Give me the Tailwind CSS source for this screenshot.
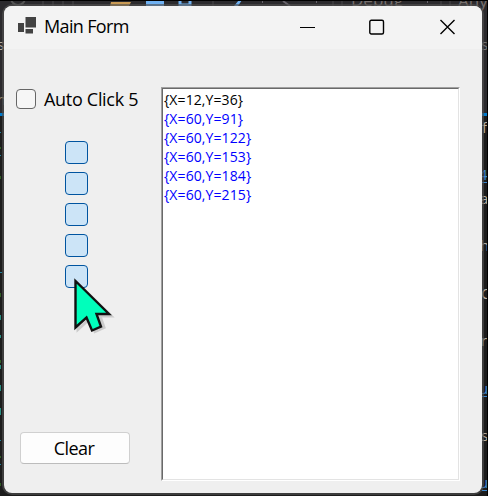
<!DOCTYPE html>
<html lang="en">
<head>
<meta charset="utf-8">
<title>Main Form</title>
<script src="https://cdn.jsdelivr.net/npm/@tailwindcss/browser@4"></script>
</head>
<body class="relative w-[488px] h-[496px] overflow-hidden bg-[#1c1c1c] pt-[6px] pl-[4px] font-['Open_Sans',sans-serif] text-black">
  <!-- Editor behind the window -->
  <svg class="absolute left-0 top-0" width="488" height="496" font-family="Open Sans, sans-serif" font-size="16">
    <rect width="488" height="115" fill="#2b2a2d"/>
    <rect y="113" width="4" height="3" fill="#007acc"/><rect x="482" y="113" width="6" height="3" fill="#007acc"/>
    <circle cx="18" cy="-2" r="7" fill="none" stroke="#555" stroke-width="2"/>
    <path d="M43 0v6M53 0v6M63 0v6M73 0v6M213 0v6M333 0v6M342 0v6M441 0v6M450 0v6" stroke="#48464b"/>
    <path d="M110 6l1-4h20l-2 4z" fill="#c99a54"/>
    <rect x="146" y="0" width="18" height="6" fill="#6fb1f2"/>
    <path d="M180 0v5h10v-5" fill="none" stroke="#6fb1f2" stroke-width="3"/>
    <path d="M242 0h-3l-5 6h4z" fill="#6fb1f2"/>
    <path d="M283 1l7 5M262 2h1M316 2h1M427 2h1" stroke="#68646c" stroke-width="2"/>
    <text x="351" y="6" fill="#77706d" font-size="17">Debug</text>
    <text x="458" y="7" fill="#77706d" font-size="17">Any</text>
    <g fill="#b8b0a4" font-size="15">
      <text x="-3" y="50">s</text><text x="-3" y="105" fill="#9b8a6b">n</text>
      <text x="481" y="50" fill="#777">s</text><text x="482" y="133">f</text>
      <text x="479" y="180" fill="#3b87cf">4</text>
      <text x="480" y="204">a</text><text x="480" y="251">h</text><text x="481" y="299">C</text>
      <text x="481" y="346">r</text>
      <text x="479" y="394" fill="#3b87cf">u</text>
      <text x="481" y="441">s</text>
      <text x="479" y="488" fill="#3b87cf">u</text>
      <path d="M482 182.500h6M482 396.500h6M482 490.500h6" stroke="#3b87cf"/>
    </g>
    <path d="M0 132.500h1M0 155.500h1M0 272.500h2M0 440.500h1M0 464.500h1" stroke="#23819b"/>
    <path d="M.5 315v5M.5 335v3M.5 365v4M.5 385v6M.5 408v7" stroke="#2b8f83"/>
    <path d="M.5 147v2M.5 176v3M.5 293v4M.5 360v3M.5 456v2M.5 483v3" stroke="#315f25"/>
    <path d="M0 .5h488M487.500 0v496" stroke="#000"/>
  </svg>

  <!-- Window -->
  <main class="relative w-[478px] h-[487px] rounded-[8px] bg-[#efefef] shadow-[0_0_0_2px_rgba(80,80,80,0.65)] overflow-hidden">
    <header class="flex h-[43px] items-center bg-[#f3f3f3] pl-[14px] pr-[27px]">
      <svg width="18" height="17" viewBox="0 0 18 17" fill="#424242" class="relative top-[-2px]"><path d="M7.500 0H18v10.500H7.500zM0 6h6v9H0zM7.500 12h7.500v4.500H7.500z"/></svg>
      <h1 class="ml-[8px] relative -top-[2px] text-[18px] leading-[24px] whitespace-nowrap tracking-[-0.65px]">Main Form</h1>
      <div class="ml-auto relative -top-px flex items-center gap-[54px]">
        <svg width="16" height="16" viewBox="0 0 16 16"><path d="M0 8.500h15" stroke="#000"/></svg>
        <svg width="16" height="16" viewBox="0 0 16 16" class="-ml-px"><rect x=".8" y="1.300" width="13.700" height="13.700" rx="1.500" fill="none" stroke="#000" stroke-width="1.400"/></svg>
        <svg width="16" height="16" viewBox="0 0 16 16"><path d="M1.500 1l14 14M15.500 1L1.500 15" stroke="#000" stroke-width="1.400"/></svg>
      </div>
    </header>
    <div class="flex pt-[38px]">
      <section class="w-[157px] pl-[12px]">
        <label class="flex h-[24px] items-center">
          <span class="w-[20px] h-[20px] rounded-[4px] border border-[#666] bg-[#f6f6f6]"></span>
          <span class="ml-[8px] text-[18px] leading-[24px] whitespace-nowrap tracking-[-0.3px]">Auto Click 5</span>
        </label>
        <div class="mt-[30px] ml-[49px] flex flex-col gap-[8px]">
          <span class="w-[23px] h-[23px] rounded-[4px] border border-[#0054a0] bg-[#cce4f7]"></span>
          <span class="w-[23px] h-[23px] rounded-[4px] border border-[#0054a0] bg-[#cce4f7]"></span>
          <span class="w-[23px] h-[23px] rounded-[4px] border border-[#0054a0] bg-[#cce4f7]"></span>
          <span class="w-[23px] h-[23px] rounded-[4px] border border-[#0054a0] bg-[#cce4f7]"></span>
          <span class="w-[23px] h-[23px] rounded-[4px] border border-[#0054a0] bg-[#cce4f7]"></span>
        </div>
        <button class="mt-[144px] ml-[4px] block w-[110px] h-[32px] rounded-[4px] border border-[#d0d0d0] border-b-[#bcbcbc] bg-[#fdfdfd] text-[18px] leading-[30px] tracking-[-0.6px] pr-[2px]">Clear</button>
      </section>
      <div class="w-[299px] h-[394px] border-t border-l border-[#a0a0a0] border-r border-b border-r-white border-b-white">
        <div class="h-full border border-t-[#696969] border-l-[#696969] border-r-[#e3e3e3] border-b-[#e3e3e3] bg-white pt-px pl-px text-[14px] leading-[19px] tracking-[0.1px] text-[#0000ff]">
          <p class="text-black">{X=12,Y=36}</p>
          <p>{X=60,Y=91}</p>
          <p>{X=60,Y=122}</p>
          <p>{X=60,Y=153}</p>
          <p>{X=60,Y=184}</p>
          <p>{X=60,Y=215}</p>
        </div>
      </div>
    </div>
  </main>

  <!-- Mouse pointer -->
  <svg class="absolute left-[70px] top-[273px]" width="50" height="65" viewBox="70 273 50 65"><path d="M75.500 281L109 314H98l4 11.500-9 4-6-12-11 10z" transform="translate(2 2)" fill="none" stroke="#000" stroke-opacity=".15" stroke-width="3"/><path d="M75.500 281L109 314H96.500l4.500 12.500-9 4-5.500-13-11 10z" fill="#0fb" stroke="#111" stroke-width="2.400"/></svg>
</body>
</html>
